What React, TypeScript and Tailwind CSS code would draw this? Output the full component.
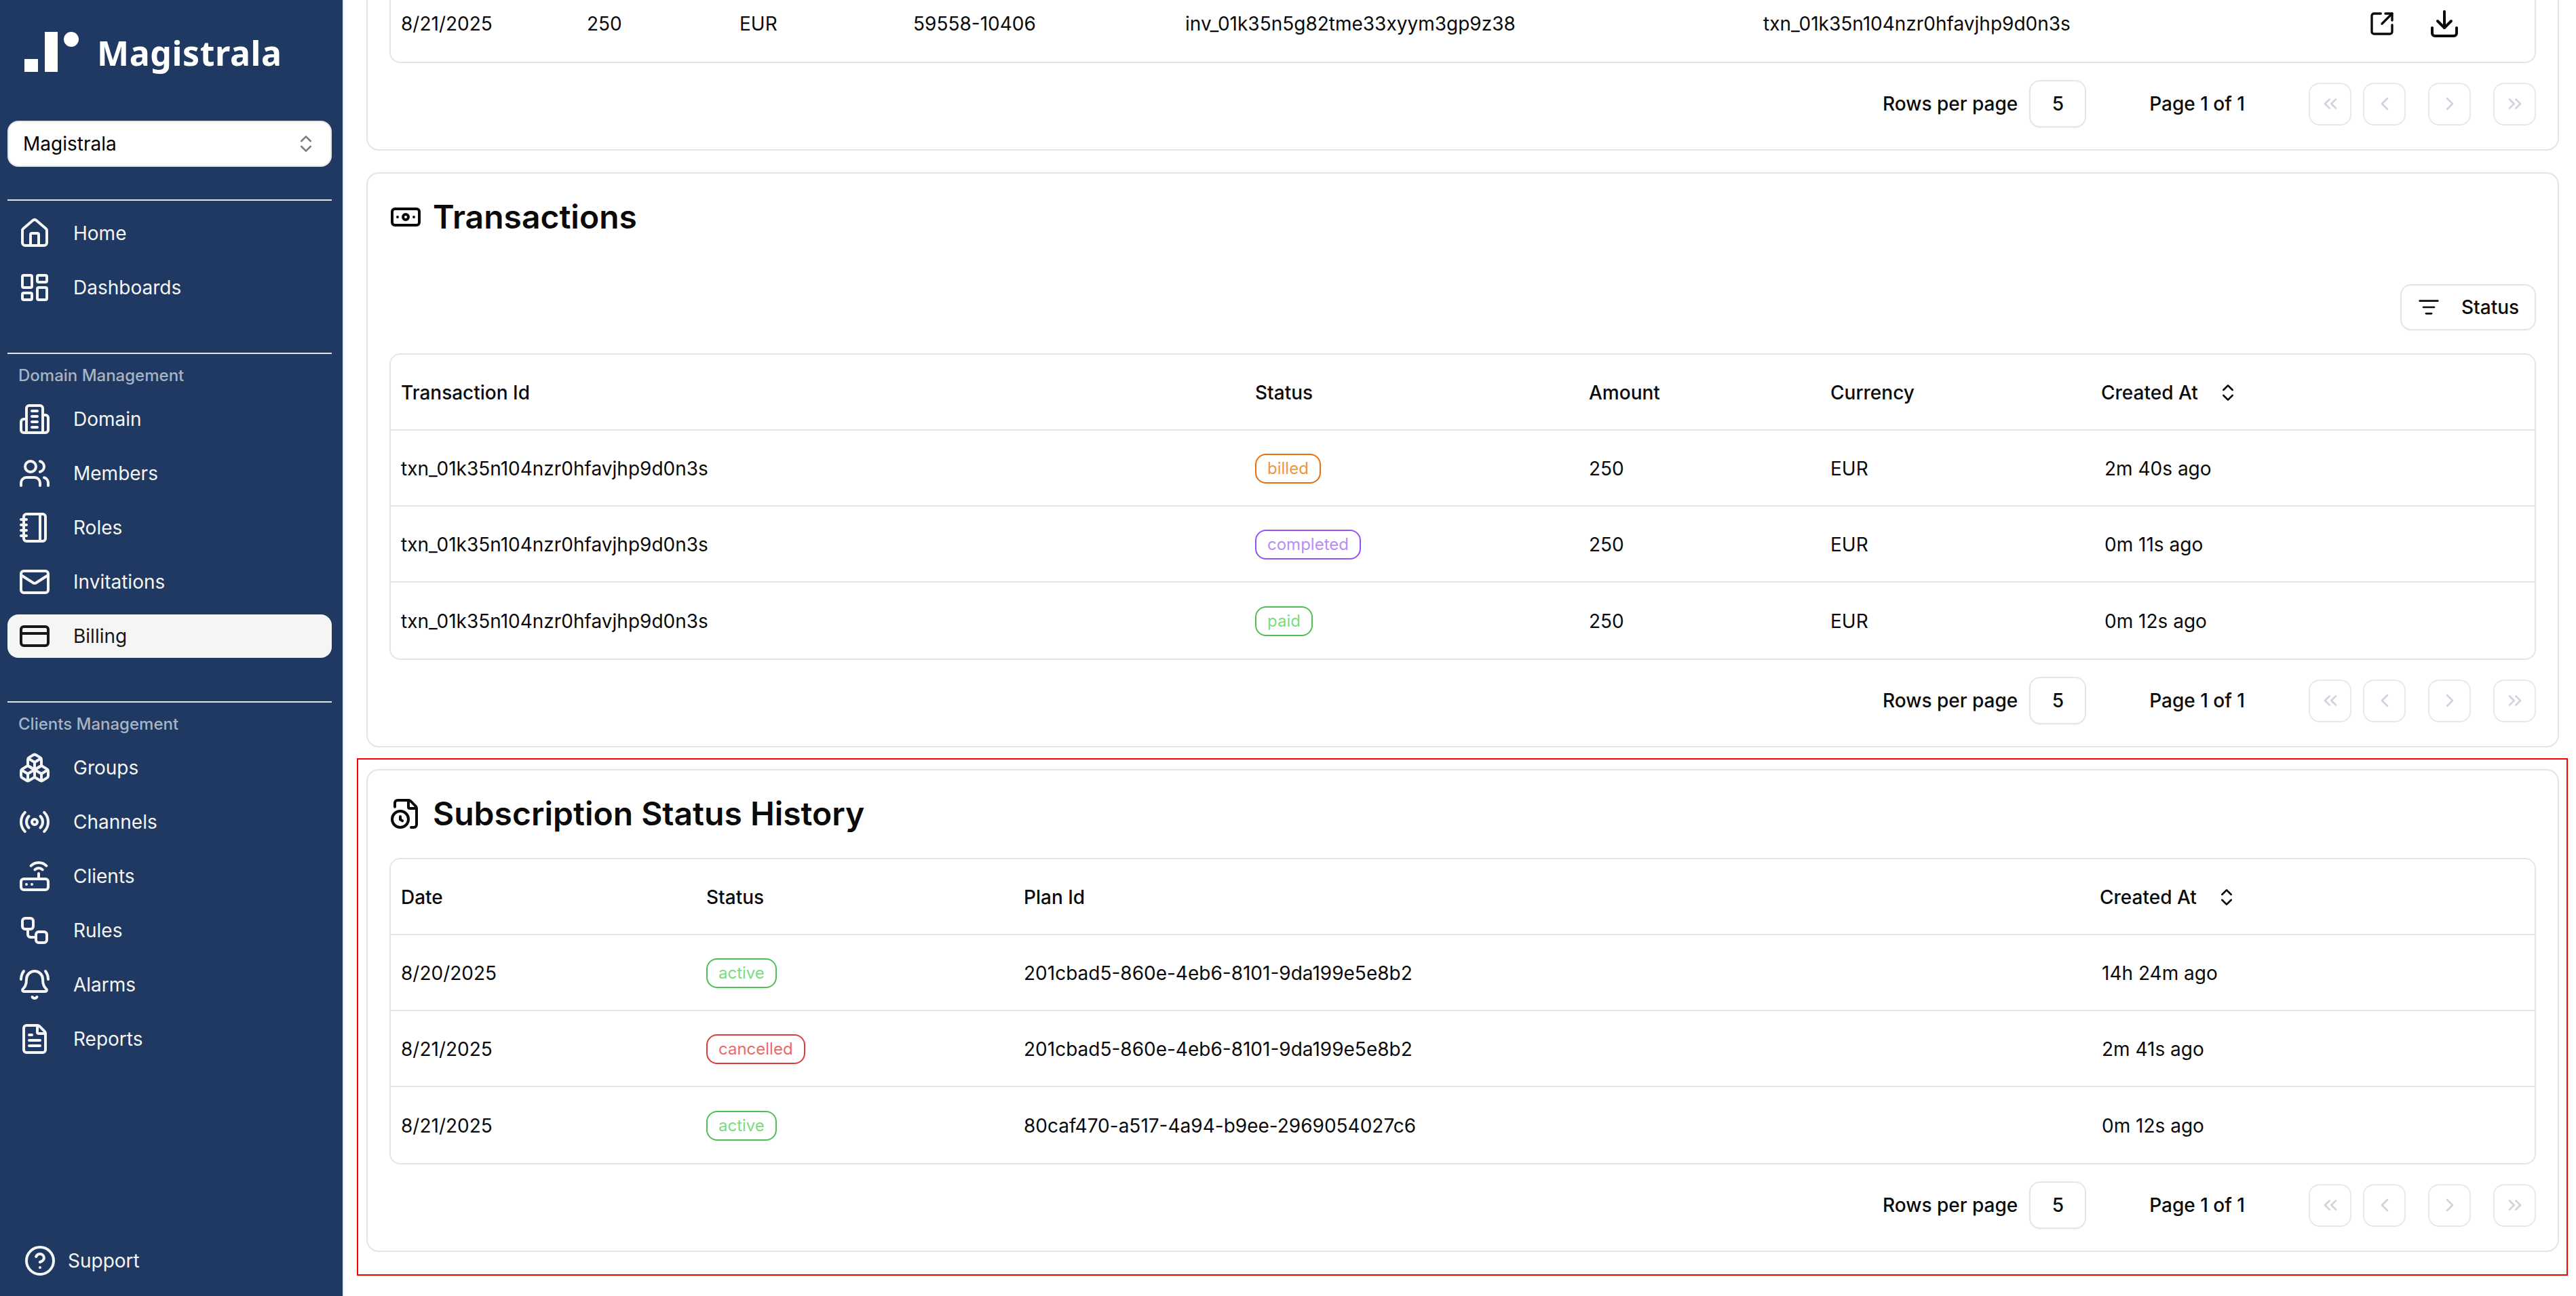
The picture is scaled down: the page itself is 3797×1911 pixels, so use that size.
import { ReactNode } from "react";
import {
  Banknote,
  BellRing,
  Boxes,
  ChevronLeft,
  ChevronRight,
  ChevronsLeft,
  ChevronsRight,
  ChevronsUpDown,
  CircleHelp,
  CreditCard,
  Download,
  FileClock,
  FileText,
  House,
  LayoutDashboard,
  ListFilter,
  LucideIcon,
  Mail,
  Notebook,
  Radio,
  Router,
  SquareArrowOutUpRight,
  Users,
  Workflow,
} from "lucide-react";

function Building({ className }: { className?: string }) {
  return (
    <svg viewBox="0 0 24 24" fill="none" stroke="currentColor" strokeWidth="2" strokeLinecap="round" strokeLinejoin="round" className={className}>
      <path d="M6 22V4a2 2 0 0 1 2-2h8a2 2 0 0 1 2 2v18Z" />
      <path d="M6 12H4a2 2 0 0 0-2 2v6a2 2 0 0 0 2 2h2" />
      <path d="M18 9h2a2 2 0 0 1 2 2v9a2 2 0 0 1-2 2h-2" />
      <path d="M10 6h4" />
      <path d="M10 10h4" />
      <path d="M10 14h4" />
      <path d="M10 18h4" />
    </svg>
  );
}

function NavItem({ icon: Icon, label, active }: { icon: LucideIcon | typeof Building; label: string; active?: boolean }) {
  return (
    <div className={`flex h-16 items-center gap-[33px] rounded-2xl pl-4 ${active ? "bg-[#f5f5f5] text-[#171717]" : "text-[#f5f5f5]"}`}>
      <Icon className="size-12 shrink-0" />
      <span className="text-[28px]">{label}</span>
    </div>
  );
}

function NavGroup({ title, children }: { title?: string; children: ReactNode }) {
  return (
    <div>
      <div className="h-0.5 bg-[#e5e5e5]" />
      {title ? (
        <div className="flex h-16 items-center pl-4 text-[24px] font-medium text-[#a8b3c4]">{title}</div>
      ) : (
        <div className="h-4" />
      )}
      <div className="flex flex-col gap-4">{children}</div>
    </div>
  );
}

function Sidebar() {
  return (
    <aside className="flex h-full w-[507px] shrink-0 flex-col border-r-2 border-[#e8ecf2] bg-[#1f3962] pl-[11px] pr-[16px]">
      <div className="flex h-[178px] items-start gap-[27px] pl-[25px] pt-[47px]">
        <svg viewBox="0 0 80 59" className="h-[59px] w-[80px] shrink-0" fill="#ffffff">
          <rect x="0" y="40" width="20" height="19" />
          <rect x="30" y="0" width="19" height="59" />
          <circle cx="69" cy="11" r="11" />
        </svg>
        <span className="mt-[1px] font-['Noto_Sans'] text-[50px] leading-[60px] font-bold tracking-[0.6px] text-white">Magistrala</span>
      </div>
      <div className="flex h-[68px] items-center justify-between rounded-2xl border-2 border-[#e5e5e5] bg-white pl-[21px] pr-5 text-[28px] text-black">
        Magistrala
        <ChevronsUpDown className="size-8 opacity-50" />
      </div>
      <div className="mt-12 flex flex-col gap-16">
        <NavGroup>
          <NavItem icon={House} label="Home" />
          <NavItem icon={LayoutDashboard} label="Dashboards" />
        </NavGroup>
        <NavGroup title="Domain Management">
          <NavItem icon={Building} label="Domain" />
          <NavItem icon={Users} label="Members" />
          <NavItem icon={Notebook} label="Roles" />
          <NavItem icon={Mail} label="Invitations" />
          <NavItem icon={CreditCard} label="Billing" active />
        </NavGroup>
        <NavGroup title="Clients Management">
          <NavItem icon={Boxes} label="Groups" />
          <NavItem icon={Radio} label="Channels" />
          <NavItem icon={Router} label="Clients" />
          <NavItem icon={Workflow} label="Rules" />
          <NavItem icon={BellRing} label="Alarms" />
          <NavItem icon={FileText} label="Reports" />
        </NavGroup>
      </div>
      <div className="mt-auto mb-[20px] flex h-16 items-center gap-[17px] pl-6 text-[28px] text-[#f5f5f5]">
        <CircleHelp className="size-12 shrink-0" />
        Support
      </div>
    </aside>
  );
}

const badgeColors: Record<string, string> = {
  billed: "border-[#ea6f0c] text-[#f0953f]",
  completed: "border-[#9650f5] text-[#b98cf9]",
  paid: "border-[#4fbf55] text-[#7ddb80]",
  active: "border-[#4fbf55] text-[#7ddb80]",
  cancelled: "border-[#dc3c3c] text-[#e96a6a]",
};

function Badge({ status }: { status: string }) {
  return (
    <span className={`inline-flex h-11 items-center rounded-2xl border-2 px-4 text-[24px] ${badgeColors[status]}`}>{status}</span>
  );
}

function Pagination() {
  const btn = "flex size-[63px] items-center justify-center rounded-2xl border-2 border-[#e8e8ea] text-[#d0d3db]";
  return (
    <div className="mt-[25px] flex h-[70px] items-center justify-end text-[28px] font-medium text-[#0a0a0a]">
      <span>Rows per page</span>
      <div className="ml-[17px] flex h-[70px] w-[84px] items-center justify-center rounded-2xl border-2 border-[#e5e5e5] shadow-xs">5</div>
      <span className="ml-[93px] mr-[94px]">Page 1 of 1</span>
      <div className={btn}><ChevronsLeft className="size-8" /></div>
      <div className={`${btn} ml-[17px]`}><ChevronLeft className="size-8" /></div>
      <div className={`${btn} ml-[33px]`}><ChevronRight className="size-8" /></div>
      <div className={`${btn} ml-[33px]`}><ChevronsRight className="size-8" /></div>
    </div>
  );
}

function CreatedAt() {
  return (
    <div className="flex items-center gap-[28px]">
      Created At
      <ChevronsUpDown className="size-8" />
    </div>
  );
}

function Title({ icon: Icon, children }: { icon: LucideIcon; children: ReactNode }) {
  return (
    <div className="flex h-[72px] items-center gap-4 text-[48px] font-semibold text-[#0a0a0a]">
      <Icon className="size-12 shrink-0" />
      {children}
    </div>
  );
}

const txnCols = "grid grid-cols-[1259px_492px_356px_399px_1fr] items-center pl-[15px] pt-0.5";
const subCols = "grid grid-cols-[450px_468px_1586px_1fr] items-center pl-[15px] pt-0.5";
const invoiceCols = "grid grid-cols-[274px_225px_256px_401px_852px_892px_1fr] items-center pl-[15px]";

function Cell({ children }: { children: ReactNode }) {
  return <div className="text-[28px] text-[#0a0a0a]">{children}</div>;
}

export default function App() {
  const transactions = [
    { status: "billed", ago: "2m 40s ago" },
    { status: "completed", ago: "0m 11s ago" },
    { status: "paid", ago: "0m 12s ago" },
  ];
  const history = [
    { date: "8/20/2025", status: "active", plan: "201cbad5-860e-4eb6-8101-9da199e5e8b2", ago: "14h 24m ago" },
    { date: "8/21/2025", status: "cancelled", plan: "201cbad5-860e-4eb6-8101-9da199e5e8b2", ago: "2m 41s ago" },
    { date: "8/21/2025", status: "active", plan: "80caf470-a517-4a94-b9ee-2969054027c6", ago: "0m 12s ago" },
  ];

  return (
    <div className="flex h-[1911px] w-[3797px] overflow-hidden bg-white font-['Inter',sans-serif]">
      <Sidebar />
      <main className="relative flex flex-1 flex-col justify-end gap-8 overflow-hidden pb-[65px] pl-[33px] pr-[25px]">
        {/* invoices card, scrolled mostly out of view */}
        <section className="shrink-0 rounded-[18px] border-2 border-[#e5e5e5] px-8 pb-8">
          <div className="rounded-b-2xl border-2 border-[#e5e5e5]">
            <div className={`${invoiceCols} h-[112px]`}>
              <Cell>8/21/2025</Cell>
              <Cell>250</Cell>
              <Cell>EUR</Cell>
              <Cell>59558-10406</Cell>
              <Cell>inv_01k35n5g82tme33xyym3gp9z38</Cell>
              <Cell>txn_01k35n104nzr0hfavjhp9d0n3s</Cell>
              <div className="flex items-center gap-[48px] text-[#0a0a0a]">
                <SquareArrowOutUpRight className="size-10" />
                <Download className="size-12" />
              </div>
            </div>
          </div>
          <Pagination />
        </section>

        <section className="shrink-0 rounded-[18px] border-2 border-[#e5e5e5] px-8 pb-8 pt-[28px]">
          <Title icon={Banknote}>Transactions</Title>
          <div className="mt-[63px] flex justify-end">
            <div className="flex h-[68px] w-[200px] items-center gap-[32px] rounded-2xl border-2 border-[#e5e5e5] pl-[24px] text-[28px] font-medium text-[#0a0a0a] shadow-xs">
              <ListFilter className="size-8 shrink-0" />
              Status
            </div>
          </div>
          <div className="mt-[34px] rounded-2xl border-2 border-[#e5e5e5]">
            <div className={`${txnCols} h-[112px] border-b-2 border-[#e5e5e5] text-[28px] font-medium text-[#0a0a0a]`}>
              <div>Transaction Id</div>
              <div>Status</div>
              <div>Amount</div>
              <div>Currency</div>
              <CreatedAt />
            </div>
            {transactions.map((t, i) => (
              <div key={t.status} className={`${txnCols} h-[112px] ${i < 2 ? "border-b-2 border-[#e5e5e5]" : ""}`}>
                <Cell>txn_01k35n104nzr0hfavjhp9d0n3s</Cell>
                <div><Badge status={t.status} /></div>
                <Cell>250</Cell>
                <Cell>EUR</Cell>
                <div className="pl-[5px]"><Cell>{t.ago}</Cell></div>
              </div>
            ))}
          </div>
          <Pagination />
        </section>

        <section className="shrink-0 rounded-[18px] border-2 border-[#e5e5e5] px-8 pb-8 pt-[28px]">
          <Title icon={FileClock}>Subscription Status History</Title>
          <div className="mt-[29px] rounded-2xl border-2 border-[#e5e5e5]">
            <div className={`${subCols} h-[112px] border-b-2 border-[#e5e5e5] text-[28px] font-medium text-[#0a0a0a]`}>
              <div>Date</div>
              <div>Status</div>
              <div>Plan Id</div>
              <CreatedAt />
            </div>
            {history.map((h, i) => (
              <div key={i} className={`${subCols} h-[112px] ${i < 2 ? "border-b-2 border-[#e5e5e5]" : ""}`}>
                <Cell>{h.date}</Cell>
                <div><Badge status={h.status} /></div>
                <Cell>{h.plan}</Cell>
                <div className="pl-[3px]"><Cell>{h.ago}</Cell></div>
              </div>
            ))}
          </div>
          <Pagination />
        </section>

        {/* red annotation frame */}
        <div className="pointer-events-none absolute bottom-[30px] left-[19px] right-[12px] h-[763px] border-2 border-[#ff0000]" />
      </main>
    </div>
  );
}
